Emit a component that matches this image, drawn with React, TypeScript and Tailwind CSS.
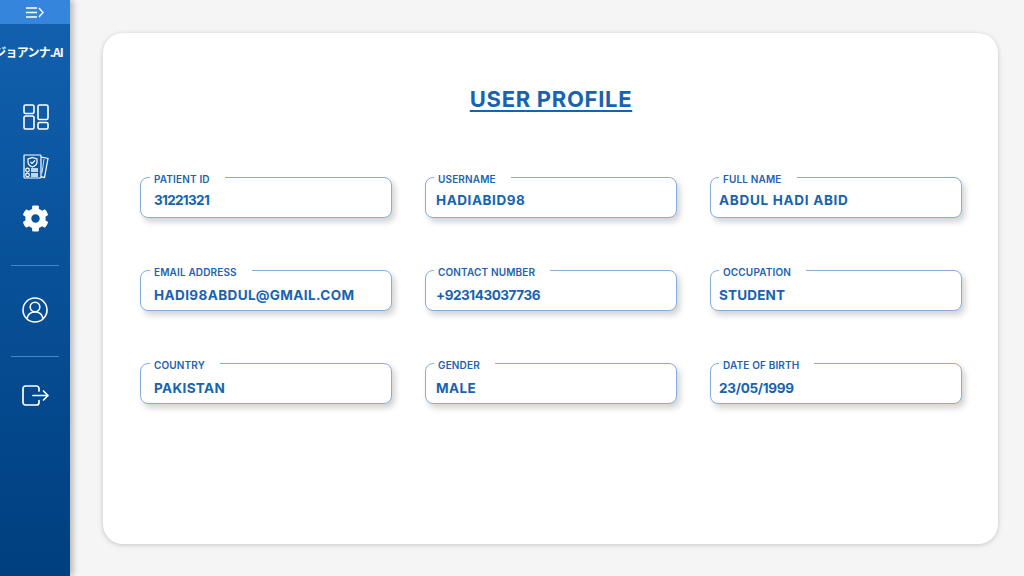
import React from "react";
import { FaCog } from "react-icons/fa";

const rows = [
  {
    pt: "pt-[5px]",
    fields: [
      { label: "PATIENT ID", value: "31221321", pad: "pl-[13px]", left: "left-[9px]", track: "tracking-[-0.67px]" },
      { label: "USERNAME", value: "HADIABID98", pad: "pl-[10px]", left: "left-[8px]", track: "tracking-[0.56px]" },
      { label: "FULL NAME", value: "ABDUL HADI ABID", pad: "pl-[8px]", left: "left-[8px]", track: "tracking-[0.71px]" },
    ],
  },
  {
    pt: "pt-[9px]",
    fields: [
      { label: "EMAIL ADDRESS", value: "HADI98ABDUL@GMAIL.COM", pad: "pl-[13px]", left: "left-[9px]", track: "tracking-[0.41px]" },
      { label: "CONTACT NUMBER", value: "+923143037736", pad: "pl-[10px]", left: "left-[8px]", track: "tracking-[-0.45px]" },
      { label: "OCCUPATION", value: "STUDENT", pad: "pl-[8px]", left: "left-[8px]", track: "tracking-[0.18px]" },
    ],
  },
  {
    pt: "pt-[9px]",
    fields: [
      { label: "COUNTRY", value: "PAKISTAN", pad: "pl-[13px]", left: "left-[9px]", track: "tracking-[0.36px]" },
      { label: "GENDER", value: "MALE", pad: "pl-[10px]", left: "left-[8px]", track: "tracking-[0.4px]" },
      { label: "DATE OF BIRTH", value: "23/05/1999", pad: "pl-[8px]", left: "left-[8px]", track: "tracking-[-0.27px]" },
    ],
  },
];

function Field({ label, value, pad, left, track, pt }: { label: string; value: string; pad: string; left: string; track: string; pt: string }) {
  return (
    <div className={`relative flex h-[41px] items-center rounded-[8px] border border-[#86aedc] bg-white shadow-[3px_4px_6px_rgba(0,0,0,0.18)] ${pad} ${pt}`}>
      <span className={`absolute top-[-5px] bg-white pl-[4px] pr-[15px] text-[10px] font-semibold leading-[13px] tracking-[0.15px] text-[#1a64b0] ${left}`}>
        {label}
      </span>
      <span className={`text-[13.5px] font-bold leading-[18px] text-[#1763b0] ${track}`}>{value}</span>
    </div>
  );
}

const DashIcon = () => (
  <svg width="26" height="26" viewBox="0 0 26 26" fill="none" stroke="white" strokeWidth="1.6">
    <rect x="1" y="1" width="10" height="8.5" rx="1.5" />
    <rect x="1" y="12" width="10" height="13" rx="1.5" />
    <rect x="15" y="1" width="10" height="14.5" rx="1.5" />
    <rect x="15" y="18.5" width="10" height="6.5" rx="1.5" />
  </svg>
);

const ReportIcon = () => (
  <svg width="26" height="26" viewBox="0 0 26 26" fill="none" stroke="white" strokeWidth="1.2">
    <rect x="1" y="1" width="17" height="23" rx="0.8" />
    <path d="M18 3l7 1.5-3.5 19-3.5-.8" />
    <path d="M21 5l-2 14" strokeWidth="0.8" />
    <path d="M9.5 3.5l4.5 1.5v3c0 2.500-2 4-4.500 5-2.500-1-4.500-2.500-4.500-5V5z" />
    <path d="M7.500 8l1.500 1.500 3-3" />
    <circle cx="4.500" cy="16" r="1.800" />
    <circle cx="4.500" cy="21" r="1.800" />
    <path d="M8 15h7M8 17h7M8 20h7M8 22h7" strokeWidth="1.300" />
  </svg>
);

const UserIcon = () => (
  <svg width="26" height="26" viewBox="0 0 26 26" fill="none" stroke="white" strokeWidth="1.600">
    <circle cx="13" cy="13" r="12" />
    <circle cx="13" cy="10" r="4.800" />
    <path d="M5 21.500c.8-4 3.800-6.500 8-6.500s7.200 2.500 8 6.500" />
  </svg>
);

const LogoutIcon = () => (
  <svg width="27" height="22" viewBox="0 0 27 22" fill="none" stroke="white" strokeWidth="1.700" strokeLinecap="round" strokeLinejoin="round">
    <path d="M17 6V3.500A2.500 2.500 0 0 0 14.500 1H3.500A2.500 2.500 0 0 0 1 3.500v14A2.500 2.500 0 0 0 3.500 20h11a2.500 2.500 0 0 0 2.500-2.500V15.500" />
    <path d="M11 10.500h15M21.500 6l4.500 4.500-4.500 4.500" />
  </svg>
);

export default function App() {
  return (
    <div className="flex h-[576px] w-[1024px] overflow-hidden bg-[#f5f5f5] font-['Inter','Open_Sans',sans-serif]">
      <aside className="z-10 flex h-full w-[70px] shrink-0 flex-col items-center overflow-hidden bg-gradient-to-b from-[#1261b0] to-[#003f7f] shadow-[3px_0_6px_rgba(0,0,0,0.25)]">
        <div className="flex h-[24px] w-full items-center justify-center bg-[#3585dc]">
          <svg width="18" height="11" viewBox="0 0 18 11" fill="none" stroke="white" strokeWidth="1.400">
            <path d="M0 1h11M0 5.500h11M0 10h11M13 1l4 4.500-4 4.500" />
          </svg>
        </div>
        <div className="mt-[19px] flex h-[18px] w-full justify-end pr-[7px]">
          <span className="whitespace-nowrap font-['Noto_Sans_CJK_JP',sans-serif] text-[12px] font-bold leading-[18px] tracking-[-0.8px] text-white">
            ジョアンナ.AI
          </span>
        </div>
        <div className="mt-[43px] pl-[1px]"><DashIcon /></div>
        <div className="mt-[24px] pl-[1px]"><ReportIcon /></div>
        <div className="mt-[25px]"><FaCog size={27} color="white" /></div>
        <div className="mt-[33px] h-px w-[48px] bg-[#3f86cf]" />
        <div className="mt-[31px]"><UserIcon /></div>
        <div className="mt-[33px] h-px w-[48px] bg-[#3f86cf]" />
        <div className="mt-[28px]"><LogoutIcon /></div>
      </aside>
      <main className="flex-1 pb-[32px] pl-[33px] pr-[26px] pt-[33px]">
        <section className="h-[511px] rounded-[20px] bg-white pl-[37px] pr-[36px] shadow-[0_1px_5px_rgba(0,0,0,0.2)]">
          <h1 className="pt-[52px] text-center text-[22px] font-bold leading-[28px] tracking-[0.7px] text-[#1763b0] underline decoration-2 underline-offset-[3px]">
            USER PROFILE
          </h1>
          <div className="mt-[64px] flex flex-col gap-[52px]">
            {rows.map((row, i) => (
              <div key={i} className="grid grid-cols-3 gap-[33px]">
                {row.fields.map((f) => (
                  <Field key={f.label} {...f} pt={row.pt} />
                ))}
              </div>
            ))}
          </div>
        </section>
      </main>
    </div>
  );
}
